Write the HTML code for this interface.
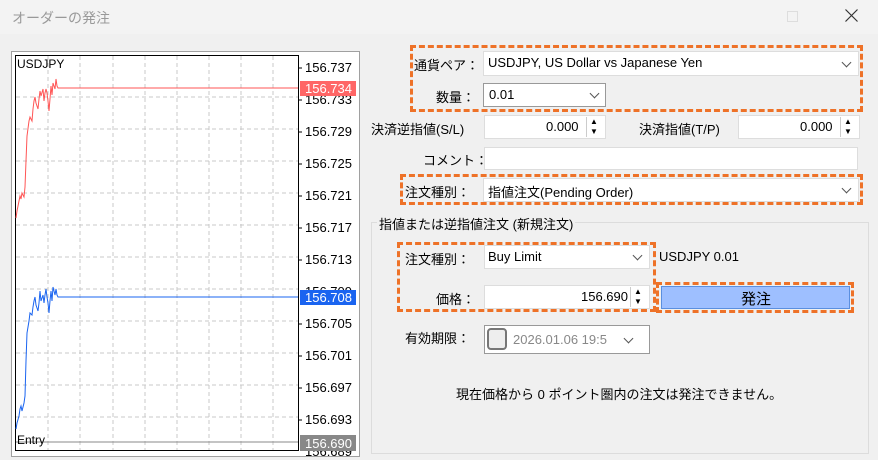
<!DOCTYPE html>
<html><head><meta charset="utf-8"><style>
body{margin:0;width:878px;height:460px;background:#f0f0f0;font-family:"Liberation Sans","Noto Sans CJK JP",sans-serif;font-size:13px;color:#000;position:relative;overflow:hidden}
.a{position:absolute}
.box{position:absolute;background:#fff;border:1px solid #adadad;box-sizing:border-box}
.dash{position:absolute;border:3px dashed #ee7228;box-sizing:border-box}
.lbl{position:absolute;white-space:nowrap}
.chev{position:absolute;width:6px;height:6px;border-right:1px solid #555;border-bottom:1px solid #555;transform:rotate(45deg)}
.spin{position:absolute;width:18px;border-left:1px solid #ccc;box-sizing:border-box}
</style></head><body>
<div class="a" style="left:0;top:0;width:878px;height:34px;background:#f3f3f3"></div>
<div class="lbl" style="left:12px;top:8px;font-size:14px;color:#999">オーダーの発注</div>
<div class="a" style="left:787px;top:11px;width:9px;height:9px;border:1px solid #ddd"></div>
<svg class="a" style="left:845px;top:9px" width="13" height="13"><path d="M0.5 0.5L12.5 12.5M12.5 0.5L0.5 12.5" stroke="#333" stroke-width="1.2"/></svg>

<svg class="a" style="left:11px;top:51px" width="349" height="406">
<rect x="0.5" y="0.5" width="348" height="405" fill="#fff" stroke="#a0a0a0"/>
<g stroke="#c8c8c8" stroke-dasharray="4,3">
<line x1="37" y1="5" x2="37" y2="399"/><line x1="69" y1="5" x2="69" y2="399"/><line x1="102" y1="5" x2="102" y2="399"/><line x1="134" y1="5" x2="134" y2="399"/><line x1="166" y1="5" x2="166" y2="399"/><line x1="198" y1="5" x2="198" y2="399"/><line x1="230" y1="5" x2="230" y2="399"/><line x1="262" y1="5" x2="262" y2="399"/>
<line x1="5" y1="46" x2="287" y2="46"/><line x1="5" y1="78" x2="287" y2="78"/><line x1="5" y1="110" x2="287" y2="110"/><line x1="5" y1="142" x2="287" y2="142"/><line x1="5" y1="174" x2="287" y2="174"/><line x1="5" y1="206" x2="287" y2="206"/><line x1="5" y1="238" x2="287" y2="238"/><line x1="5" y1="270" x2="287" y2="270"/><line x1="5" y1="302" x2="287" y2="302"/><line x1="5" y1="334" x2="287" y2="334"/><line x1="5" y1="366" x2="287" y2="366"/>
</g>
<rect x="4.5" y="4.5" width="283" height="395" fill="none" stroke="#000"/>
<g stroke="#000"><line x1="287" y1="17" x2="291" y2="17"/><line x1="287" y1="49" x2="291" y2="49"/><line x1="287" y1="81" x2="291" y2="81"/><line x1="287" y1="113" x2="291" y2="113"/><line x1="287" y1="145" x2="291" y2="145"/><line x1="287" y1="177" x2="291" y2="177"/><line x1="287" y1="209" x2="291" y2="209"/><line x1="287" y1="273" x2="291" y2="273"/><line x1="287" y1="305" x2="291" y2="305"/><line x1="287" y1="337" x2="291" y2="337"/><line x1="287" y1="369" x2="291" y2="369"/></g>
<polyline fill="none" stroke="#f55" stroke-width="1" points="5,167 6,160 8,150 9,145 10,148 11,142 13,146 14,136 15,110 16,85 18,70 19,66 21,70 22,58 23,50 24,46 25,52 27,58 28,48 29,40 30,45 32,38 33,50 34,42 35,38 36,42 37,50 38,60 39,48 40,35 41,44 42,32 44,38 45,28 46,35 47,37 287,37"/>
<polyline fill="none" stroke="#1a64f0" stroke-width="1" points="5,378 6,372 8,365 9,358 10,355 11,360 13,352 14,345 15,310 16,282 18,270 19,262 21,264 22,256 23,250 24,246 25,254 27,260 28,252 29,240 30,250 32,244 33,252 34,244 35,238 36,246 37,252 38,262 39,250 40,240 41,250 42,236 44,244 45,238 46,244 47,246 287,246"/>
<line x1="5" y1="391" x2="287" y2="391" stroke="#888"/>
<g font-family="Liberation Sans" font-size="13" fill="#000">
<text x="6" y="17" font-size="12">USDJPY</text>
<text x="6" y="393" font-size="12">Entry</text>
<text x="294" y="21">156.737</text><text x="294" y="53">156.733</text><text x="294" y="85">156.729</text><text x="294" y="117">156.725</text><text x="294" y="149">156.721</text><text x="294" y="181">156.717</text><text x="294" y="213">156.713</text><text x="294" y="245">156.709</text><text x="294" y="277">156.705</text><text x="294" y="309">156.701</text><text x="294" y="341">156.697</text><text x="294" y="373">156.693</text><text x="294" y="405">156.689</text>
</g>
<rect x="289" y="30" width="56" height="15" fill="#f66"/><text x="294" y="42" fill="#fff" font-family="Liberation Sans" font-size="13">156.734</text>
<rect x="289" y="239" width="56" height="15" fill="#1a64f0"/><text x="294" y="251" fill="#fff" font-family="Liberation Sans" font-size="13">156.708</text>
<rect x="289" y="384" width="56" height="16" fill="#888"/><text x="294" y="397" fill="#fff" font-family="Liberation Sans" font-size="13">156.690</text>
</svg>

<div class="dash" style="left:410px;top:45px;width:453px;height:67px"></div>
<div class="lbl" style="left:414px;top:55px">通貨ペア：</div>
<div class="box" style="left:483px;top:51px;width:376px;height:25px;border-color:#ddd"></div>
<div class="lbl" style="left:488px;top:55px">USDJPY, US Dollar vs Japanese Yen</div>
<div class="chev" style="left:843px;top:59px"></div>
<div class="lbl" style="left:436px;top:87px">数量：</div>
<div class="box" style="left:483px;top:83px;width:123px;height:24px;border-color:#999"></div>
<div class="lbl" style="left:489px;top:87px">0.01</div>
<div class="chev" style="left:591px;top:90px"></div>

<div class="lbl" style="left:371px;top:119px">決済逆指値(S/L)</div>
<div class="box" style="left:484px;top:115px;width:122px;height:24px;border-color:#ddd"></div>
<div class="lbl" style="left:546px;top:119px">0.000</div>
<div class="spin" style="left:586px;top:117px;height:20px"><div class="lbl" style="left:3px;top:0;font-size:8px">▲</div><div class="lbl" style="left:3px;top:10px;font-size:8px">▼</div></div>
<div class="lbl" style="left:639px;top:119px">決済指値(T/P)</div>
<div class="box" style="left:738px;top:115px;width:122px;height:24px;border-color:#ddd"></div>
<div class="lbl" style="left:800px;top:119px">0.000</div>
<div class="spin" style="left:840px;top:117px;height:20px"><div class="lbl" style="left:3px;top:0;font-size:8px">▲</div><div class="lbl" style="left:3px;top:10px;font-size:8px">▼</div></div>

<div class="lbl" style="left:423px;top:150px">コメント：</div>
<div class="box" style="left:484px;top:147px;width:374px;height:23px;border-color:#ddd"></div>

<div class="dash" style="left:400px;top:174px;width:463px;height:31px"></div>
<div class="lbl" style="left:405px;top:182px">注文種別：</div>
<div class="box" style="left:483px;top:178px;width:376px;height:24px;border-color:#ddd"></div>
<div class="lbl" style="left:488px;top:182px">指値注文(Pending Order)</div>
<div class="chev" style="left:843px;top:185px"></div>

<div class="a" style="left:371px;top:222px;width:498px;height:232px;border:1px solid #dcdcdc;box-sizing:border-box"></div>
<div class="lbl" style="left:377px;top:214px;background:#f0f0f0;padding:0 2px">指値または逆指値注文 (新規注文)</div>

<div class="dash" style="left:397px;top:242px;width:259px;height:70px"></div>
<div class="lbl" style="left:405px;top:249px">注文種別：</div>
<div class="box" style="left:484px;top:245px;width:166px;height:24px;border-color:#ddd"></div>
<div class="lbl" style="left:488px;top:249px">Buy Limit</div>
<div class="chev" style="left:634px;top:252px"></div>
<div class="lbl" style="left:659px;top:249px">USDJPY 0.01</div>
<div class="lbl" style="left:436px;top:289px">価格：</div>
<div class="box" style="left:484px;top:285px;width:166px;height:24px;border-color:#ddd"></div>
<div class="lbl" style="left:581px;top:289px">156.690</div>
<div class="spin" style="left:630px;top:287px;height:20px"><div class="lbl" style="left:3px;top:0;font-size:8px">▲</div><div class="lbl" style="left:3px;top:10px;font-size:8px">▼</div></div>
<div class="dash" style="left:656px;top:282px;width:198px;height:31px"></div>
<div class="a" style="left:661px;top:286px;width:189px;height:23px;background:#9ebfff;border:1px solid #5a8fe0;box-sizing:border-box"></div>
<div class="lbl" style="left:741px;top:288px;font-size:15px">発注</div>

<div class="lbl" style="left:405px;top:328px">有効期限：</div>
<div class="box" style="left:484px;top:325px;width:166px;height:29px;border-color:#999"></div>
<div class="a" style="left:487px;top:328px;width:20px;height:22px;border:2px solid #777;border-radius:4px;background:#eee;box-sizing:border-box"></div>
<div class="lbl" style="left:513px;top:332px;color:#888">2026.01.06 19:5</div>
<div class="chev" style="left:625px;top:335px"></div>

<div class="lbl" style="left:456px;top:384px">現在価格から 0 ポイント圏内の注文は発注できません。</div>
</body></html>
